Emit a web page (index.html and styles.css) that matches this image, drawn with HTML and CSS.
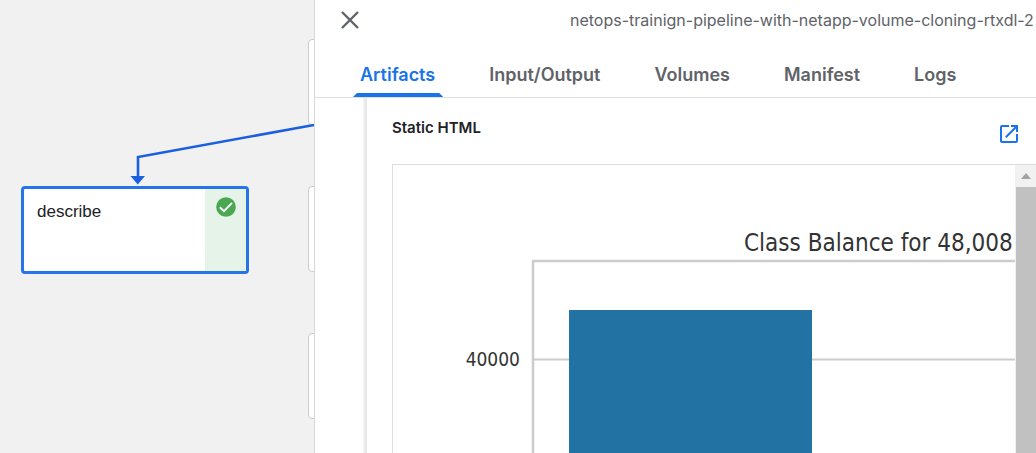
FILE: index.html
```html
<!DOCTYPE html>
<html lang="en">
<head>
<meta charset="utf-8">
<title>Pipeline run</title>
<link rel="stylesheet" href="styles.css">
</head>
<body>
<div class="app">
  <main class="canvas">
    <div class="peer peer-a"></div>
    <div class="peer peer-b"></div>
    <div class="peer peer-c"></div>
    <svg class="edge" width="314" height="190" viewBox="0 0 314 190" aria-hidden="true">
      <path d="M314 125 138 157V178" fill="none" stroke="#1a5fe0" stroke-width="2.6"/>
      <path d="M130.500 176h14.500l-7.250 8.500z" fill="#1a5fe0"/>
    </svg>
    <div class="node">
      <span class="node-name">describe</span>
      <span class="node-status">
        <svg width="20" height="20" viewBox="0 0 20 20" role="img" aria-label="Succeeded">
          <circle cx="10" cy="10" r="9.800" fill="#4aa752"/>
          <path d="M3.800 10.200 8 14.200 16 5.800" fill="none" stroke="#fff" stroke-width="1.900"/>
        </svg>
      </span>
    </div>
  </main>
  <aside class="panel">
    <header class="panel-head">
      <button class="close" type="button" aria-label="Close">
        <svg width="18" height="18" viewBox="0 0 18 18"><path d="M1 1 17 17M17 1 1 17" stroke="#5f6368" stroke-width="2.400"/></svg>
      </button>
      <div class="run-name">netops-trainign-pipeline-with-netapp-volume-cloning-rtxdl-2</div>
    </header>
    <nav class="tabs">
      <button class="tab tab-active" type="button">Artifacts</button>
      <button class="tab" type="button">Input/Output</button>
      <button class="tab" type="button">Volumes</button>
      <button class="tab" type="button">Manifest</button>
      <button class="tab" type="button">Logs</button>
    </nav>
    <div class="panel-body">
      <section class="artifact">
        <div class="artifact-head">
          <h2 class="artifact-title">Static HTML</h2>
          <a class="popout" href="#" aria-label="Open in new window">
            <svg width="18" height="18" viewBox="0 0 18 18" fill="none" stroke="#1a73e8" stroke-width="2">
              <path d="M9 1H2Q1 1 1 2V16Q1 17 2 17H16Q17 17 17 16V9M11 1H17V7M17 1 5.800 12.200"/>
            </svg>
          </a>
        </div>
        <div class="frame">
          <div class="frame-view">
            <svg class="chart" width="900" height="480" viewBox="0 0 900 480">
              <g fill="none" stroke="#ccc">
                <path d="M140 194.500H900" stroke-width="2"/>
                <path d="M140 96V480M139 96H900" stroke-width="2.500"/>
              </g>
              <rect x="176" y="145" width="243" height="335" fill="#2272a4"/>
              <text class="chart-title" x="351" y="86">Class Balance for 48,008</text>
              <text class="chart-tick" x="127" y="201" text-anchor="end">40000</text>
            </svg>
          </div>
          <div class="scrollbar">
            <div class="scroll-up"></div>
            <div class="scroll-thumb"></div>
          </div>
        </div>
      </section>
    </div>
  </aside>
</div>
</body>
</html>
```
FILE: styles.css
```css
* { box-sizing: border-box; }
body { margin: 0; }
button { padding: 0; border: 0; background: none; font: inherit; }
svg { display: block; }

.app {
  display: grid;
  grid-template-columns: 314px minmax(0, 1fr);
  height: 100vh;
  overflow: hidden;
  background: #fff;
  font-family: Inter, "Open Sans", sans-serif;
  color: #202124;
}

.canvas { position: relative; overflow: hidden; background: #f1f1f1; }
.edge { position: absolute; left: 0; top: 0; }
.peer {
  position: absolute;
  left: 308px;
  width: 228px;
  height: 86px;
  border: 1px solid #ccc;
  border-radius: 4px;
  background: #fff;
}
.peer-a { top: 39px; }
.peer-b { top: 186px; }
.peer-c { top: 333px; }
.node {
  position: absolute;
  left: 21px;
  top: 186px;
  display: flex;
  width: 228px;
  height: 88px;
  border: 3px solid #2574e8;
  border-radius: 4px;
  background: #fff;
}
.node-name {
  flex: 1;
  padding: 13px;
  font: 17px/20px "Liberation Sans", Arial, sans-serif;
}
.node-status {
  display: flex;
  justify-content: center;
  width: 41px;
  padding-top: 8px;
  background: #e6f3e9;
}

.panel {
  display: flex;
  flex-direction: column;
  min-width: 0;
  border-left: 1px solid #d8d8d8;
  background: #fff;
}
.panel-head {
  display: flex;
  align-items: center;
  gap: 211px;
  height: 39px;
  padding-left: 26px;
  overflow: hidden;
}
.close { flex: none; }
.run-name { font-size: 16px; line-height: 20px; color: #5f6368; white-space: nowrap; }

.tabs {
  display: flex;
  gap: 38px;
  height: 59px;
  padding-left: 37px;
  border-bottom: 1px solid #e0e0e0;
}
.tab {
  position: relative;
  display: flex;
  align-items: center;
  height: 58px;
  padding: 14px 8px 0;
  font-size: 18px;
  line-height: 22px;
  font-weight: 600;
  color: #5f6368;
}
.tab-active { color: #1a73e8; }
.tab-active::after {
  content: "";
  position: absolute;
  left: 1px;
  right: 0;
  bottom: 0;
  height: 4px;
  background: #1a73e8;
  clip-path: polygon(4px 0, calc(100% - 4px) 0, 100% 100%, 0 100%);
}

.panel-body { flex: 1; min-height: 0; padding-left: 50px; overflow: hidden; }
.artifact {
  display: flex;
  flex-direction: column;
  height: 100%;
  padding-left: 25px;
  border-left: 2px solid #e8e8e8;
  box-shadow: -1px 0 2px #e4e4e4;
}
.artifact-head {
  display: flex;
  flex: none;
  justify-content: space-between;
  height: 66px;
  padding: 20px 18px 0 0;
}
.artifact-title { margin: 0; font-size: 15px; line-height: 20px; font-weight: 600; }
.popout { padding-top: 7px; }
.frame {
  display: flex;
  flex: 1;
  min-height: 0;
  border: solid #ddd;
  border-width: 1px 0 0 1px;
}
.frame-view { flex: 1; min-width: 0; overflow: hidden; }
.chart { font-family: "DejaVu Sans Condensed", "Noto Sans", sans-serif; fill: #333; }
.chart-title { font-size: 24px; }
.chart-tick { font-size: 19px; }
.scrollbar { display: flex; flex-direction: column; width: 21px; background: #f1f1f1; }
.scroll-up { display: flex; align-items: center; justify-content: center; height: 22px; }
.scroll-up::before {
  content: "";
  border: solid transparent;
  border-width: 0 5px 6px;
  border-bottom-color: #a3a3a3;
}
.scroll-thumb { flex: 1; margin-left: 1px; background: #c1c1c1; }
```
